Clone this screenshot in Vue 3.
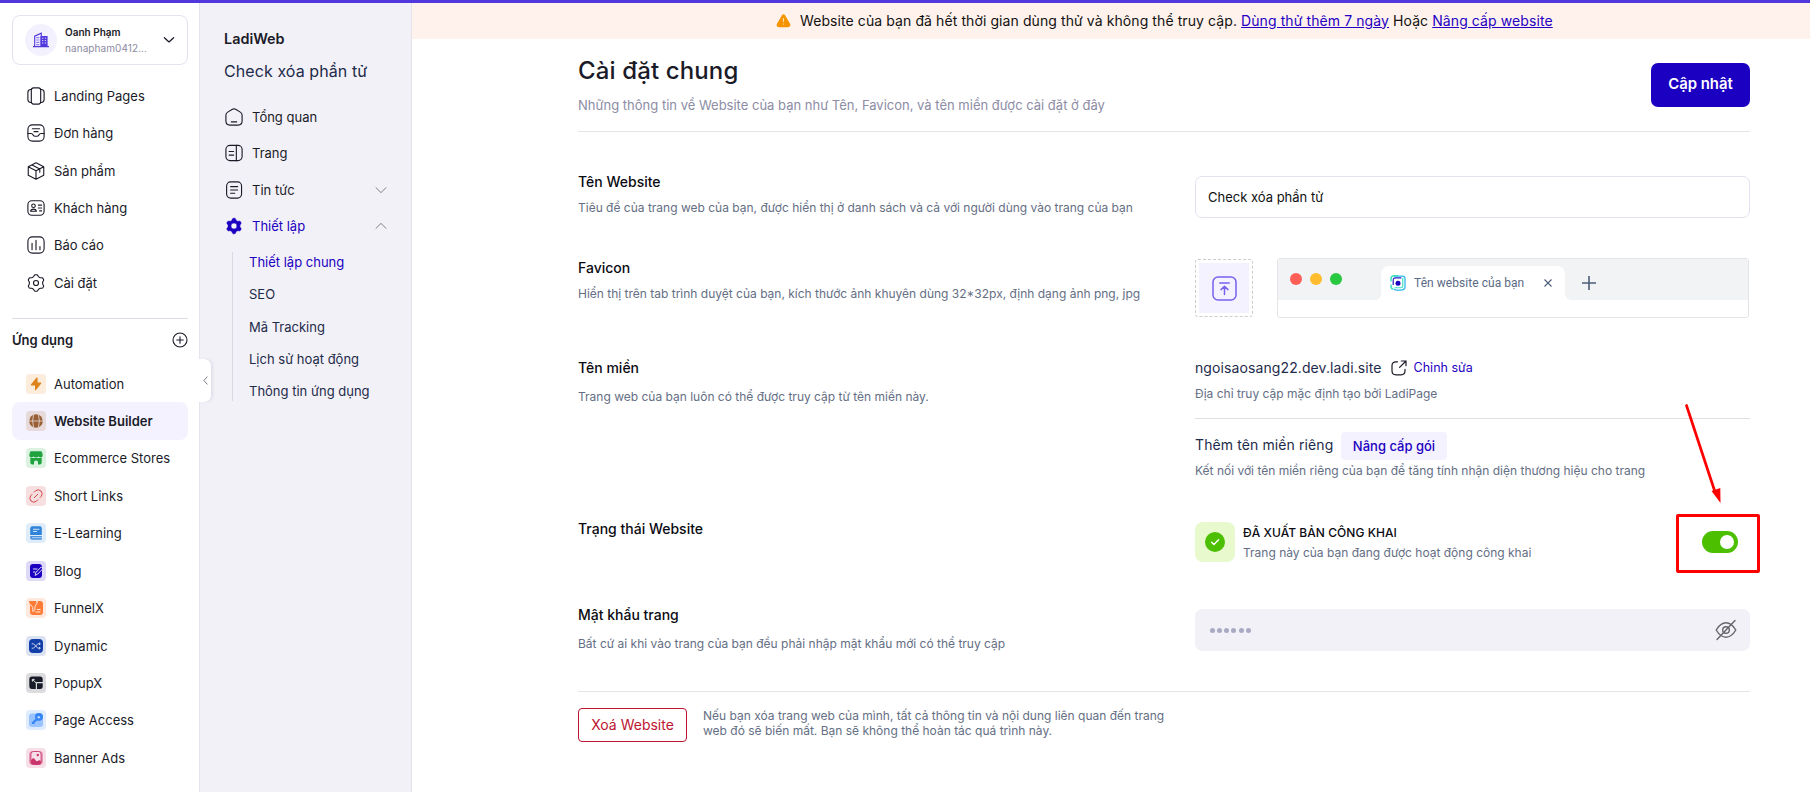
<script setup>
const navItems = [
  { label: 'Landing Pages', icon: 'landing' },
  { label: 'Đơn hàng', icon: 'order' },
  { label: 'Sản phẩm', icon: 'product' },
  { label: 'Khách hàng', icon: 'customer' },
  { label: 'Báo cáo', icon: 'report' },
  { label: 'Cài đặt', icon: 'gear' },
]

const apps = [
  { label: 'Automation', icon: 'bolt', tone: 'amber' },
  { label: 'Website Builder', icon: 'globe', tone: 'brown', active: true },
  { label: 'Ecommerce Stores', icon: 'store', tone: 'green' },
  { label: 'Short Links', icon: 'link', tone: 'red' },
  { label: 'E-Learning', icon: 'book', tone: 'blue' },
  { label: 'Blog', icon: 'blog', tone: 'violet' },
  { label: 'FunnelX', icon: 'funnel', tone: 'orange' },
  { label: 'Dynamic', icon: 'shuffle', tone: 'navy' },
  { label: 'PopupX', icon: 'popup', tone: 'black' },
  { label: 'Page Access', icon: 'key', tone: 'sky' },
  { label: 'Banner Ads', icon: 'banner', tone: 'pink' },
]

const siteNav = [
  { label: 'Tổng quan', icon: 'home' },
  { label: 'Trang', icon: 'page' },
  { label: 'Tin tức', icon: 'news', chevron: 'down' },
  { label: 'Thiết lập', icon: 'cog', chevron: 'up', active: true },
]

const subNav = ['Thiết lập chung', 'SEO', 'Mã Tracking', 'Lịch sử hoạt động', 'Thông tin ứng dụng']

// Six-toothed gear outline, sampled in polar form around (10, 10).
function gear(radius, depth) {
  const points = []
  for (let i = 0; i < 120; i++) {
    const t = (i / 120) * Math.PI * 2
    const r = radius + depth * Math.tanh(1.6 * Math.cos(6 * (t - Math.PI / 2)))
    points.push(`${(10 + r * Math.cos(t)).toFixed(2)} ${(10 + r * Math.sin(t)).toFixed(2)}`)
  }
  return 'M' + points.join('L') + 'Z'
}
const gearPath = gear(8.3, 1)
const cogPath = gear(7.6, 1.15)
</script>

<template>
  <div class="page">
    <div class="topbar"></div>
    <div class="shell">
      <aside class="side">
        <div class="account">
          <div class="avatar">
            <svg width="16" height="16" viewBox="0 0 16 16">
              <path d="M1.7 15V4.2L8.3 1.2V15M0 14.6H16" fill="none" stroke="#5138dd" stroke-width="1.1" />
              <path d="M7.4 4H14.6V15H7.4Z" fill="#5138dd" />
              <path d="M3.2 5.6H6.4M3.2 8H6.4M3.2 10.4H6.4M3.2 12.6H6.4" stroke="#8f80ec" stroke-width="1.1" />
              <path d="M9 6.2H10.4M11.8 6.2H13.2M9 8.6H10.4M11.8 8.6H13.2M9 11H10.4M11.8 11H13.2" stroke="#d8d2fa" />
            </svg>
          </div>
          <div class="who">
            <div class="name">Oanh Phạm</div>
            <div class="mail">nanapham0412...</div>
          </div>
          <svg class="caret" width="12" height="8" viewBox="0 0 12 8"><path d="M1.4 1.8L6 5.9L10.6 1.8" fill="none" stroke="#1b1b28" stroke-width="1.3" stroke-linecap="round" stroke-linejoin="round" /></svg>
        </div>

        <nav class="menu">
          <div v-for="n in navItems" :key="n.icon" class="item">
            <svg class="line-icon" width="18" height="18" viewBox="0 0 20 20">
              <template v-if="n.icon === 'landing'">
                <rect x="4.8" y="1" width="10.4" height="18" rx="2.5" />
                <path d="M4.8 2.8H3.6Q1 3.2 1 6V14Q1 16.8 3.6 17.2H4.8M15.2 2.8H16.4Q19 3.2 19 6V14Q19 16.8 16.4 17.2H15.2" />
              </template>
              <template v-else-if="n.icon === 'order'">
                <rect x="1" y="1" width="18" height="18" rx="5" />
                <path d="M1 10.5H4.5Q6 10.5 6.6 12Q7.2 13.6 8.6 13.6H11.4Q12.8 13.6 13.4 12Q14 10.5 15.5 10.5H19M6 5.3H14M7.8 8.5H12.2" />
              </template>
              <template v-else-if="n.icon === 'product'">
                <path d="M10 .9L18.6 5.2V14.6L10 19.1L1.4 14.6V5.2ZM1.4 5.4L10 9.8L18.6 5.4M10 9.8V19M5.6 3.3L14.2 7.8V11.4" />
              </template>
              <template v-else-if="n.icon === 'customer'">
                <rect x="1" y="2" width="18" height="16" rx="4.5" />
                <circle cx="7.2" cy="7.5" r="2" />
                <path d="M4 13.6Q4.3 11.2 7.2 11.2Q10.1 11.2 10.4 13.6ZM12.6 6.8H16.2M12.6 10H16.2M14 13.2H16.2" />
              </template>
              <template v-else-if="n.icon === 'report'">
                <rect x="1" y="1" width="18" height="18" rx="5" />
                <path d="M5.6 8.2V15.2M10 4.8V15.2M14.4 11.6V15.2" />
              </template>
              <template v-else>
                <path :d="gearPath" />
                <circle cx="10" cy="10" r="2.8" />
              </template>
            </svg>
            <span>{{ n.label }}</span>
          </div>
        </nav>

        <div class="apps-head">
          <span>Ứng dụng</span>
          <svg width="16" height="16" viewBox="0 0 16 16" fill="none" stroke="#1b1b28" stroke-width="1.1" stroke-linecap="round"><circle cx="8" cy="8" r="7" /><path d="M8 4.8V11.2M4.8 8H11.2" /></svg>
        </div>

        <nav class="menu">
          <div v-for="a in apps" :key="a.icon" class="item app" :class="{ active: a.active }">
            <span class="tile" :class="a.tone">
              <svg width="14" height="14" viewBox="0 0 14 14" fill="currentColor">
                <path v-if="a.icon === 'bolt'" d="M7.6 .6L1.9 7.6Q1.5 8.3 2.3 8.4H6V12.8Q6.2 13.8 7 13L12.2 6.5Q12.6 5.7 11.8 5.6H8.6V1.2Q8.4 .2 7.6 .6Z" />
                <g v-else-if="a.icon === 'globe'">
                  <circle cx="7" cy="7" r="6.8" />
                  <path d="M0 7H14M4.6 .6Q2.6 7 4.6 13.4M9.4 .6Q11.4 7 9.4 13.4" fill="none" stroke="#e6dadb" stroke-width=".8" />
                </g>
                <g v-else-if="a.icon === 'store'">
                  <path d="M2 .2H12Q13 .2 13.2 1.7L13.7 4.4Q13.6 6.4 11.8 6.4Q10.2 6.4 9.5 5.4Q8.6 6.4 7 6.4Q5.4 6.4 4.5 5.4Q3.8 6.4 2.2 6.4Q.4 6.4 .3 4.4L.8 1.7Q1 .2 2 .2Z" />
                  <path d="M1.3 7.1H12.7V11.5Q12.7 13.6 10.6 13.6H9V11.2Q9 9.6 7 9.6Q5 9.6 5 11.2V13.6H3.4Q1.3 13.6 1.3 11.5Z" />
                </g>
                <g v-else-if="a.icon === 'link'" fill="none" stroke="currentColor" stroke-width="1" stroke-linecap="round">
                  <path d="M5.2 3.2L6.7 1.7Q9.4 -.4 12 2Q14.2 4.6 12.3 7.3L11 8.6M8.8 10.8L7.3 12.3Q4.6 14.4 2 12Q-.2 9.4 1.7 6.7L3 5.4M5.3 8.7L8.7 5.3" />
                </g>
                <g v-else-if="a.icon === 'book'">
                  <path d="M3.5 .3H11Q12.8 .3 12.8 2.2V9H1.2V2.6Q1.2 .3 3.5 .3Z" />
                  <path d="M1.2 9.9H12.8V13.7H3.2Q1.2 13.7 1.2 11.8Z" opacity=".85" />
                  <path d="M4 3.3H10.4M4 5.5H8" stroke="#e0edfa" stroke-width=".9" />
                  <path d="M3 11.7H12.8" stroke="#e0edfa" stroke-width=".7" />
                </g>
                <g v-else-if="a.icon === 'blog'">
                  <rect x="1" y="0" width="12" height="14" rx="3" />
                  <path d="M4 5H8.5M4 8H6.5M6 11.4L7 8.3L12.2 3L14 4.6L8.8 10Z" fill="none" stroke="#ded9f6" stroke-width="1" />
                </g>
                <g v-else-if="a.icon === 'funnel'">
                  <path d="M0 0H7L8 2.5L9 0H11Q14 0 14 3V11Q14 14 11 14H4Q1 14 1 11V5Z" />
                  <path d="M.5 2.5L3.8 6.5V10.5L6 8.8V5.5L8.4 1.5M8 8.5H11.5M6.5 11H11.5" fill="none" stroke="#ffe6da" stroke-width="1" />
                </g>
                <g v-else-if="a.icon === 'shuffle'">
                  <rect width="14" height="14" rx="4" />
                  <path d="M2.7 4.8H4.6L8.8 9.2H11.2M2.7 9.2H4.6L8.8 4.8H11.2M10 3.6L11.3 4.8L10 6M10 8L11.3 9.2L10 10.4" fill="none" stroke="#dce2f2" stroke-width=".9" />
                </g>
                <g v-else-if="a.icon === 'popup'">
                  <path d="M3 .5H11Q13.7 .5 13.7 3V6H7.8Q6.8 6 6.8 7V13H3Q.3 13 .3 10V3Q.3 .5 3 .5ZM8 7.3H13.7V10.5Q13.7 13 11 13H8Z" />
                  <path d="M3.4 3.4H5.6M3.4 3.4V5.6M3.4 3.4L7.4 7.2" fill="none" stroke="#dededf" stroke-width="1" />
                </g>
                <g v-else-if="a.icon === 'key'">
                  <rect y=".4" width="14" height="13.6" rx="3" fill="#98c3ff" />
                  <path d="M6.5 1.2Q8 0 10 .1Q14 .3 14 4Q13.8 7.5 10 7.8Q9 8 8 7.4L5.5 9.8V11H3.2L2.7 9.4L6.4 6Q5.4 3 6.5 1.2Z" fill="#3385f5" />
                  <circle cx="9.8" cy="4.2" r="1.3" fill="#b6d5ff" />
                </g>
                <g v-else>
                  <rect x="0" y="0" width="14" height="14" rx="3.8" opacity=".4" />
                  <rect x="1.9" y=".5" width="10.2" height="13" rx="2.5" fill="#f6dfe7" stroke="#cb336c" stroke-width=".9" />
                  <path d="M2 9.5Q4 5.5 6 8.5Q7.5 11 9 9.8Q11 8.5 12 10.5V11.5Q11.6 13.6 9.6 13.6H4.4Q2 13.6 2 11.5Z" />
                  <circle cx="8.8" cy="4" r="1.2" />
                </g>
              </svg>
            </span>
            <span>{{ a.label }}</span>
          </div>
        </nav>
      </aside>

      <aside class="panel">
        <div class="handle"><svg width="5" height="9" viewBox="0 0 5 9"><path d="M4.4 .6L.9 4.5L4.4 8.4" fill="none" stroke="#777782" /></svg></div>
        <div class="product">LadiWeb</div>
        <div class="site">Check xóa phần tử</div>
        <nav class="site-nav">
          <div v-for="s in siteNav" :key="s.icon" class="site-item" :class="{ active: s.active }">
            <svg class="line-icon" width="18" height="18" viewBox="0 0 20 20">
              <template v-if="s.icon === 'home'">
                <path d="M8.2 1.4Q10 .4 11.8 1.4L17 4.6Q19 5.8 19 8V14.5Q19 19 14.5 19H5.5Q1 19 1 14.5V8Q1 5.8 3 4.6ZM7 15.4H13" />
              </template>
              <template v-else-if="s.icon === 'page'">
                <rect x="1" y="1.5" width="18" height="17" rx="4.5" />
                <path d="M12.6 1.5V18.5M4.6 8.3H9.6M4.6 12.3H9.6" />
              </template>
              <template v-else-if="s.icon === 'news'">
                <rect x="1.8" y="1" width="16.6" height="18" rx="4.5" />
                <path d="M6.2 6.2H14M6.2 10H14M6.2 13.6H10.8" />
              </template>
              <path v-else :d="cogPath + 'M13.4 10A3.4 3.4 0 1 0 6.6 10A3.4 3.4 0 1 0 13.4 10Z'" class="solid" fill-rule="evenodd" />
            </svg>
            <span class="grow">{{ s.label }}</span>
            <svg v-if="s.chevron" width="12" height="8" viewBox="0 0 12 8"><path :d="s.chevron === 'up' ? 'M.7 6.6L6 1.4L11.3 6.6' : 'M.7 1.4L6 6.6L11.3 1.4'" fill="none" stroke="#808089" /></svg>
          </div>
        </nav>
        <div class="sub-nav">
          <div v-for="(s, i) in subNav" :key="s" :class="{ active: i === 0 }">{{ s }}</div>
        </div>
      </aside>

      <main class="main">
        <div class="banner">
          <svg width="15" height="14" viewBox="0 0 15 14"><path d="M5.8 1.4Q7.5 -.8 9.2 1.4L14 9.8Q15.2 13 12 13.2H3Q-.2 13 1 9.8Z" fill="#f59300" /><path d="M7.5 4.2V7.7M7.5 9.4V10.6" stroke="#ffe3ba" stroke-width="1.2" /></svg>
          <span>Website của bạn đã hết thời gian dùng thử và không thể truy cập. <a>Dùng thử thêm 7 ngày</a> Hoặc <a>Nâng cấp website</a></span>
        </div>

        <div class="content">
          <header class="head">
            <div>
              <h1>Cài đặt chung</h1>
              <p>Những thông tin về Website của bạn như Tên, Favicon, và tên miền được cài đặt ở đây</p>
            </div>
            <button class="primary">Cập nhật</button>
          </header>

          <section class="row r-name">
            <div class="info">
              <h2>Tên Website</h2>
              <p>Tiêu đề của trang web của bạn, được hiển thị ở danh sách và cả với người dùng vào trang của bạn</p>
            </div>
            <div class="control input">Check xóa phần tử</div>
          </section>

          <section class="row r-favicon">
            <div class="info">
              <h2>Favicon</h2>
              <p>Hiển thị trên tab trình duyệt của bạn, kích thước ảnh khuyên dùng 32*32px, định dạng ảnh png, jpg</p>
            </div>
            <div class="control favicon">
              <div class="upload">
                <div class="drop">
                  <svg width="25" height="25" viewBox="0 0 25 25" fill="none" stroke="#7a60ec" stroke-width="1.5" stroke-linecap="round" stroke-linejoin="round"><rect x="1" y="1" width="23" height="23" rx="5" /><path d="M7.8 7H17.2M12.5 18.5V10.2M9 13.6L12.5 10.2L16 13.6" /></svg>
                </div>
              </div>
              <div class="browser">
                <div class="strip">
                  <i class="dot close"></i><i class="dot min"></i><i class="dot max"></i>
                  <div class="tab">
                    <svg width="16" height="16" viewBox="0 0 16 16" fill="none"><path d="M4 1.2H12.5Q15 1.2 15 3.5V12Q15 14.8 12 14.8L8 15.3L3.8 14.4" stroke="#32b8ea" stroke-width="1.3" /><path d="M12.8 3V11Q12.8 12.8 10.8 12.8H4.6" stroke="#38e0c0" stroke-width="1.1" /><path d="M1 6.5V3.6Q1.2 .9 4.2 .8H8M1 9.5V12Q1.4 14 3.4 14.3" stroke="#38e0c0" stroke-width="1.5" /><path d="M3.2 10V5.2Q3.2 2.8 5.6 2.8H11.4" stroke="#2a1cc8" stroke-width="1.2" /><circle cx="8" cy="8.2" r="2.5" fill="#1c00c2" /></svg>
                    <span>Tên website của bạn</span>
                    <svg width="8" height="8" viewBox="0 0 8 8"><path d="M.5 .5L7.5 7.5M7.5 .5L.5 7.5" stroke="#4e5d78" stroke-width="1.1" /></svg>
                  </div>
                  <svg class="plus" width="14" height="14" viewBox="0 0 14 14"><path d="M7 0V14M0 7H14" stroke="#4e5d78" stroke-width="1.6" /></svg>
                </div>
              </div>
            </div>
          </section>

          <section class="row r-domain">
            <div class="info">
              <h2>Tên miền</h2>
              <p>Trang web của bạn luôn có thể được truy cập từ tên miền này.</p>
            </div>
            <div class="control">
              <div class="domain">
                <span>ngoisaosang22.dev.ladi.site</span>
                <svg width="16" height="16" viewBox="0 0 16 16" fill="none" stroke="#1b1b28" stroke-width="1.2" stroke-linecap="round" stroke-linejoin="round"><path d="M6.5 1.8H5Q1 1.8 1 5.8V10.8Q1 14.8 5 14.8H10Q14 14.8 14 10.8V9.4M10.3 1H15V5.7M15 1L8.6 7.4" /></svg>
                <a>Chỉnh sửa</a>
              </div>
              <p class="hint">Địa chỉ truy cập mặc định tạo bởi LadiPage</p>
              <div class="custom">
                <span>Thêm tên miền riêng</span>
                <button class="soft">Nâng cấp gói</button>
              </div>
              <p class="hint connect">Kết nối với tên miền riêng của bạn để tăng tính nhận diện thương hiệu cho trang</p>
            </div>
          </section>

          <section class="row r-status">
            <div class="info"><h2>Trạng thái Website</h2></div>
            <div class="control status">
              <div class="badge">
                <svg width="20" height="20" viewBox="0 0 20 20"><circle cx="10" cy="10" r="10" fill="#4cbf00" /><path d="M6.6 10.3L9 12.6L13.6 7.8" fill="none" stroke="#fff" stroke-width="1.4" stroke-linecap="round" stroke-linejoin="round" /></svg>
              </div>
              <div class="state">
                <strong>ĐÃ XUẤT BẢN CÔNG KHAI</strong>
                <p>Trang này của bạn đang được hoạt động công khai</p>
              </div>
              <div class="toggle">
                <i></i>
                <svg class="mark" width="100" height="180" viewBox="0 0 100 180">
                  <path d="M16.5 7.5L45 94" stroke="#fe0000" stroke-width="2.7" stroke-linecap="round" />
                  <path d="M50.5 105L41.5 93L50.3 90Z" fill="#fe0000" />
                  <rect x="7.5" y="117.5" width="81" height="56" fill="none" stroke="#fe0000" stroke-width="3" rx=".5" />
                </svg>
              </div>
            </div>
          </section>

          <section class="row r-pass">
            <div class="info">
              <h2>Mật khẩu trang</h2>
              <p>Bất cứ ai khi vào trang của bạn đều phải nhập mật khẩu mới có thể truy cập</p>
            </div>
            <div class="control input locked">
              <div class="bullets"><i v-for="n in 6" :key="n"></i></div>
              <svg width="22" height="22" viewBox="0 0 22 22" fill="none" stroke="#65656c" stroke-width="1.4" stroke-linecap="round"><path d="M1.2 11Q5.5 3.8 11 3.8Q16.5 3.8 20.8 11Q16.5 18.2 11 18.2Q5.5 18.2 1.2 11Z" /><circle cx="11" cy="11" r="3.3" /><path d="M20 1.5L2 20.5" /></svg>
            </div>
          </section>

          <footer class="danger">
            <button class="delete">Xoá Website</button>
            <p>Nếu bạn xóa trang web của mình, tất cả thông tin và nội dung liên quan đến trang<br />web đó sẽ biến mất. Bạn sẽ không thể hoàn tác quá trình này.</p>
          </footer>
        </div>
      </main>
    </div>
  </div>
</template>

<style>
html,
body {
  margin: 0;
  overflow: hidden;
}
</style>

<style scoped>
.page,
.page * {
  box-sizing: border-box;
}
.page {
  width: 1810px;
  height: 792px;
  display: flex;
  flex-direction: column;
  overflow: hidden;
  background: #fff;
  color: #1b1b28;
  font-family: Inter, 'Liberation Sans', sans-serif;
  font-size: 13px;
  line-height: 20px;
}
.page h1,
.page h2,
.page p {
  margin: 0;
}
button {
  font-family: inherit;
  padding: 0;
}
.topbar {
  height: 3px;
  background: #5138dd;
  flex: none;
}
.shell {
  flex: 1;
  display: flex;
  min-height: 0;
}
.side {
  width: 200px;
  flex: none;
  padding: 12px 11px 0 12px;
  border-right: 1px solid #e4e4ec;
}
.account {
  height: 50px;
  border: 1px solid #e4e3f0;
  border-radius: 8px;
  display: flex;
  align-items: center;
  padding: 0 12px;
}
.avatar {
  width: 32px;
  height: 32px;
  border-radius: 50%;
  background: #f3f1fe;
  display: grid;
  place-items: center;
  margin-right: 8px;
}
.who {
  flex: 1;
}
.name {
  font-size: 10px;
  font-weight: 600;
  line-height: 16px;
}
.mail {
  font-size: 10px;
  line-height: 16px;
  letter-spacing: 0.08px;
  color: #8c8ca1;
}
.menu {
  display: flex;
  flex-direction: column;
}
.account + .menu {
  margin-top: 12px;
}
.item {
  height: 37.45px;
  display: flex;
  align-items: center;
  padding-left: 15px;
  gap: 9px;
  border-radius: 8px;
  white-space: nowrap;
}
.line-icon {
  fill: none;
  stroke: #1b1b28;
  stroke-width: 1.25;
  stroke-linecap: round;
  stroke-linejoin: round;
  flex: none;
}
.apps-head {
  margin-top: 16px;
  border-top: 1px solid #dddde8;
  height: 47.2px;
  padding-bottom: 3.4px;
  display: flex;
  align-items: center;
  justify-content: space-between;
  font-weight: 600;
}
.app {
  padding-left: 14px;
  gap: 8px;
}
.app.active {
  background: #f4f2fe;
  font-weight: 600;
}
.tile {
  width: 20px;
  height: 20px;
  border-radius: 4px;
  display: grid;
  place-items: center;
}
.amber { background: #fbecdb; color: #dd831a; }
.brown { background: #e6dadb; color: #996035; }
.green { background: #dcf2e1; color: #1fa33f; }
.red { background: #f7dfe0; color: #d0444c; }
.blue { background: #dfecfa; color: #2f83d8; }
.violet { background: #ded9f6; color: #1c00c2; }
.orange { background: #ffe8dd; color: #ff7c36; }
.navy { background: #dbe2f1; color: #123fa9; }
.black { background: #dcdcde; color: #171c28; }
.sky { background: #dfebff; color: #3385f5; }
.pink { background: #f6dfe7; color: #cb336c; }

.panel {
  width: 212px;
  flex: none;
  background: #f2f1f7;
  border-right: 1px solid #e3e3e9;
  padding: 26px 24px 0;
  position: relative;
}
.handle {
  position: absolute;
  left: -1px;
  top: 356px;
  width: 12px;
  height: 43px;
  background: #fff;
  border-radius: 0 7px 7px 0;
  box-shadow: 2px 0 3px rgba(40, 40, 80, 0.08);
  display: grid;
  place-items: center;
}
.product {
  font-size: 14.4px;
  font-weight: 600;
  line-height: 20px;
}
.site {
  font-size: 16px;
  line-height: 24px;
  letter-spacing: 0.08px;
  margin-top: 10px;
  color: #1e2b4a;
}
.site-nav {
  margin-top: 16px;
}
.site-item {
  height: 36.3px;
  display: flex;
  align-items: center;
  gap: 9px;
  padding-left: 1px;
}
.site-item .grow {
  flex: 1;
}
.site-item.active,
.sub-nav .active {
  color: #1c00c2;
}
.solid {
  fill: #1c00c2;
  stroke: #1c00c2;
  stroke-width: 0.6;
}
.sub-nav {
  margin: 8px 0 0 8px;
  padding-left: 16px;
  border-left: 1px solid #d9d9e2;
  display: flex;
  flex-direction: column;
  gap: 12.3px;
  color: #1e2b4a;
  white-space: nowrap;
}

.main {
  flex: 1;
  min-width: 0;
}
.banner {
  height: 36px;
  background: #fff2ec;
  display: flex;
  align-items: center;
  gap: 9px;
  padding-left: 364px;
  font-size: 14px;
  letter-spacing: 0.09px;
  color: #111;
  white-space: nowrap;
}
.banner span {
  padding-bottom: 1px;
}
a {
  color: #2400c4;
  text-decoration: underline;
}
.content {
  padding: 0 60px 0 166px;
}
.head {
  height: 93px;
  border-bottom: 1px solid #e4e4ea;
  display: flex;
  justify-content: space-between;
}
h1 {
  font-size: 24px;
  font-weight: 500;
  line-height: 32px;
  letter-spacing: 0.13px;
  padding-top: 16px;
}
.head p {
  font-size: 13px;
  color: #8c8ca5;
  padding-top: 8px;
}
.primary {
  margin-top: 24px;
  width: 99px;
  height: 44px;
  border: 0;
  border-radius: 7px;
  background: #1c00c2;
  color: #fff;
  font-size: 14.9px;
  font-weight: 600;
  padding-bottom: 2px;
}
.row {
  display: flex;
}
.info {
  width: 617px;
  flex: none;
  color: #646e84;
  font-size: 12px;
  white-space: nowrap;
}
h2 {
  font-size: 14px;
  font-weight: 500;
  line-height: 20px;
  color: #0b0b12;
}
.info p {
  margin-top: 6px;
}
.control {
  width: 555px;
}
.r-name { height: 86px; margin-top: 40px; }
.r-favicon { height: 100px; }
.r-domain { height: 161px; }
.r-status { height: 86px; }
.r-pass { height: 86px; }
.r-domain .info p,
.r-pass .info p {
  margin-top: 9px;
}
.input {
  height: 42px;
  margin-top: 4px;
  border: 1px solid #e3e2f0;
  border-radius: 7px;
  padding: 0 12px;
  display: flex;
  align-items: center;
  color: #111;
}
.favicon {
  display: flex;
  gap: 24px;
}
.upload {
  width: 58px;
  height: 58px;
  margin-top: 1px;
  border: 1px dashed #cbcbd2;
  border-radius: 3px;
  padding: 3px;
}
.drop {
  height: 50px;
  background: #f4f2fe;
  display: grid;
  place-items: center;
}
.browser {
  width: 472px;
  height: 60px;
  border: 1px solid #e4e5e9;
  border-radius: 3px;
}
.strip {
  height: 41px;
  background: #f2f3f5;
  display: flex;
  padding-left: 12px;
}
.dot {
  width: 12px;
  height: 12px;
  border-radius: 50%;
  margin: 14px 8px 0 0;
}
.close { background: #ff5f57; }
.min { background: #febc2e; }
.max { background: #28c840; }
.tab {
  position: relative;
  width: 184px;
  height: 34px;
  margin: 7px 0 0 31px;
  border-radius: 8px 8px 0 0;
  background: #fff;
  display: flex;
  align-items: center;
  padding-left: 9px;
  font-family: Roboto, sans-serif;
  font-size: 12px;
  color: #5a6a85;
}
.tab::before,
.tab::after {
  content: '';
  position: absolute;
  bottom: 0;
  width: 6px;
  height: 6px;
}
.tab::before {
  left: -6px;
  background: radial-gradient(circle at 0 0, #f2f3f5 6px, #fff 6px);
}
.tab::after {
  right: -6px;
  background: radial-gradient(circle at 100% 0, #f2f3f5 6px, #fff 6px);
}
.tab span {
  width: 130px;
  margin-left: 8px;
  letter-spacing: 0.05px;
}
.plus {
  margin: 17px 0 0 17px;
}
.domain {
  display: flex;
  align-items: center;
  height: 20px;
  font-size: 14px;
  letter-spacing: 0.1px;
  color: #1e2b4a;
}
.domain svg {
  margin: 0 7px 0 9px;
}
.domain a {
  font-size: 12.5px;
  letter-spacing: 0;
  text-decoration: none;
}
.hint,
.state p {
  font-size: 12px;
  color: #646e84;
}
.hint {
  margin-top: 6px !important;
}
.custom {
  margin-top: 14px;
  border-top: 1px solid #dedee3;
  padding-top: 13px;
  height: 42px;
  display: flex;
  font-size: 14px;
  letter-spacing: 0.1px;
  color: #1e2b4a;
}
.custom span {
  width: 146px;
  padding-top: 3px;
}
.soft {
  width: 106px;
  height: 28px;
  border: 0;
  border-radius: 4px;
  background: #f4f2fe;
  color: #1c00c2;
  font-size: 13px;
  font-weight: 500;
}
.hint.connect {
  margin-top: 1px !important;
}
.status {
  display: flex;
  padding-top: 3px;
}
.badge {
  width: 40px;
  height: 40px;
  border-radius: 8px;
  background: #e8facd;
  display: grid;
  place-items: center;
}
.state {
  margin-left: 8px;
  flex: 1;
}
.state strong {
  display: block;
  font-size: 12px;
  font-weight: 500;
  letter-spacing: 0.05px;
  color: #0b0b12;
  padding-top: 1px;
}
.toggle {
  position: relative;
  width: 36px;
  height: 22px;
  margin: 9px 12px 0 0;
  border-radius: 11px;
  background: #4cbf00;
  padding: 4px 0 0 18px;
}
.toggle i {
  display: block;
  width: 14px;
  height: 14px;
  border-radius: 50%;
  background: #fff;
}
.mark {
  position: absolute;
  left: -32px;
  top: -133px;
}
.locked {
  background: #f2f1f7;
  border-color: #f2f1f7;
  justify-content: space-between;
  margin-top: 4px;
}
.bullets {
  display: flex;
  gap: 2.3px;
  padding: 1px 0 0 1.5px;
}
.bullets i {
  width: 5px;
  height: 5px;
  border-radius: 50%;
  background: #a9a9c4;
}
.danger {
  border-top: 1px solid #e4e4ea;
  padding-top: 16px;
  display: flex;
}
.delete {
  width: 109px;
  height: 34px;
  border: 1px solid #bd1430;
  border-radius: 4px;
  background: #fff;
  color: #bd1430;
  font-size: 14px;
  padding-bottom: 1px;
  margin-right: 16px;
}
.danger p {
  font-size: 12px;
  line-height: 15px;
  color: #646e84;
}
</style>
